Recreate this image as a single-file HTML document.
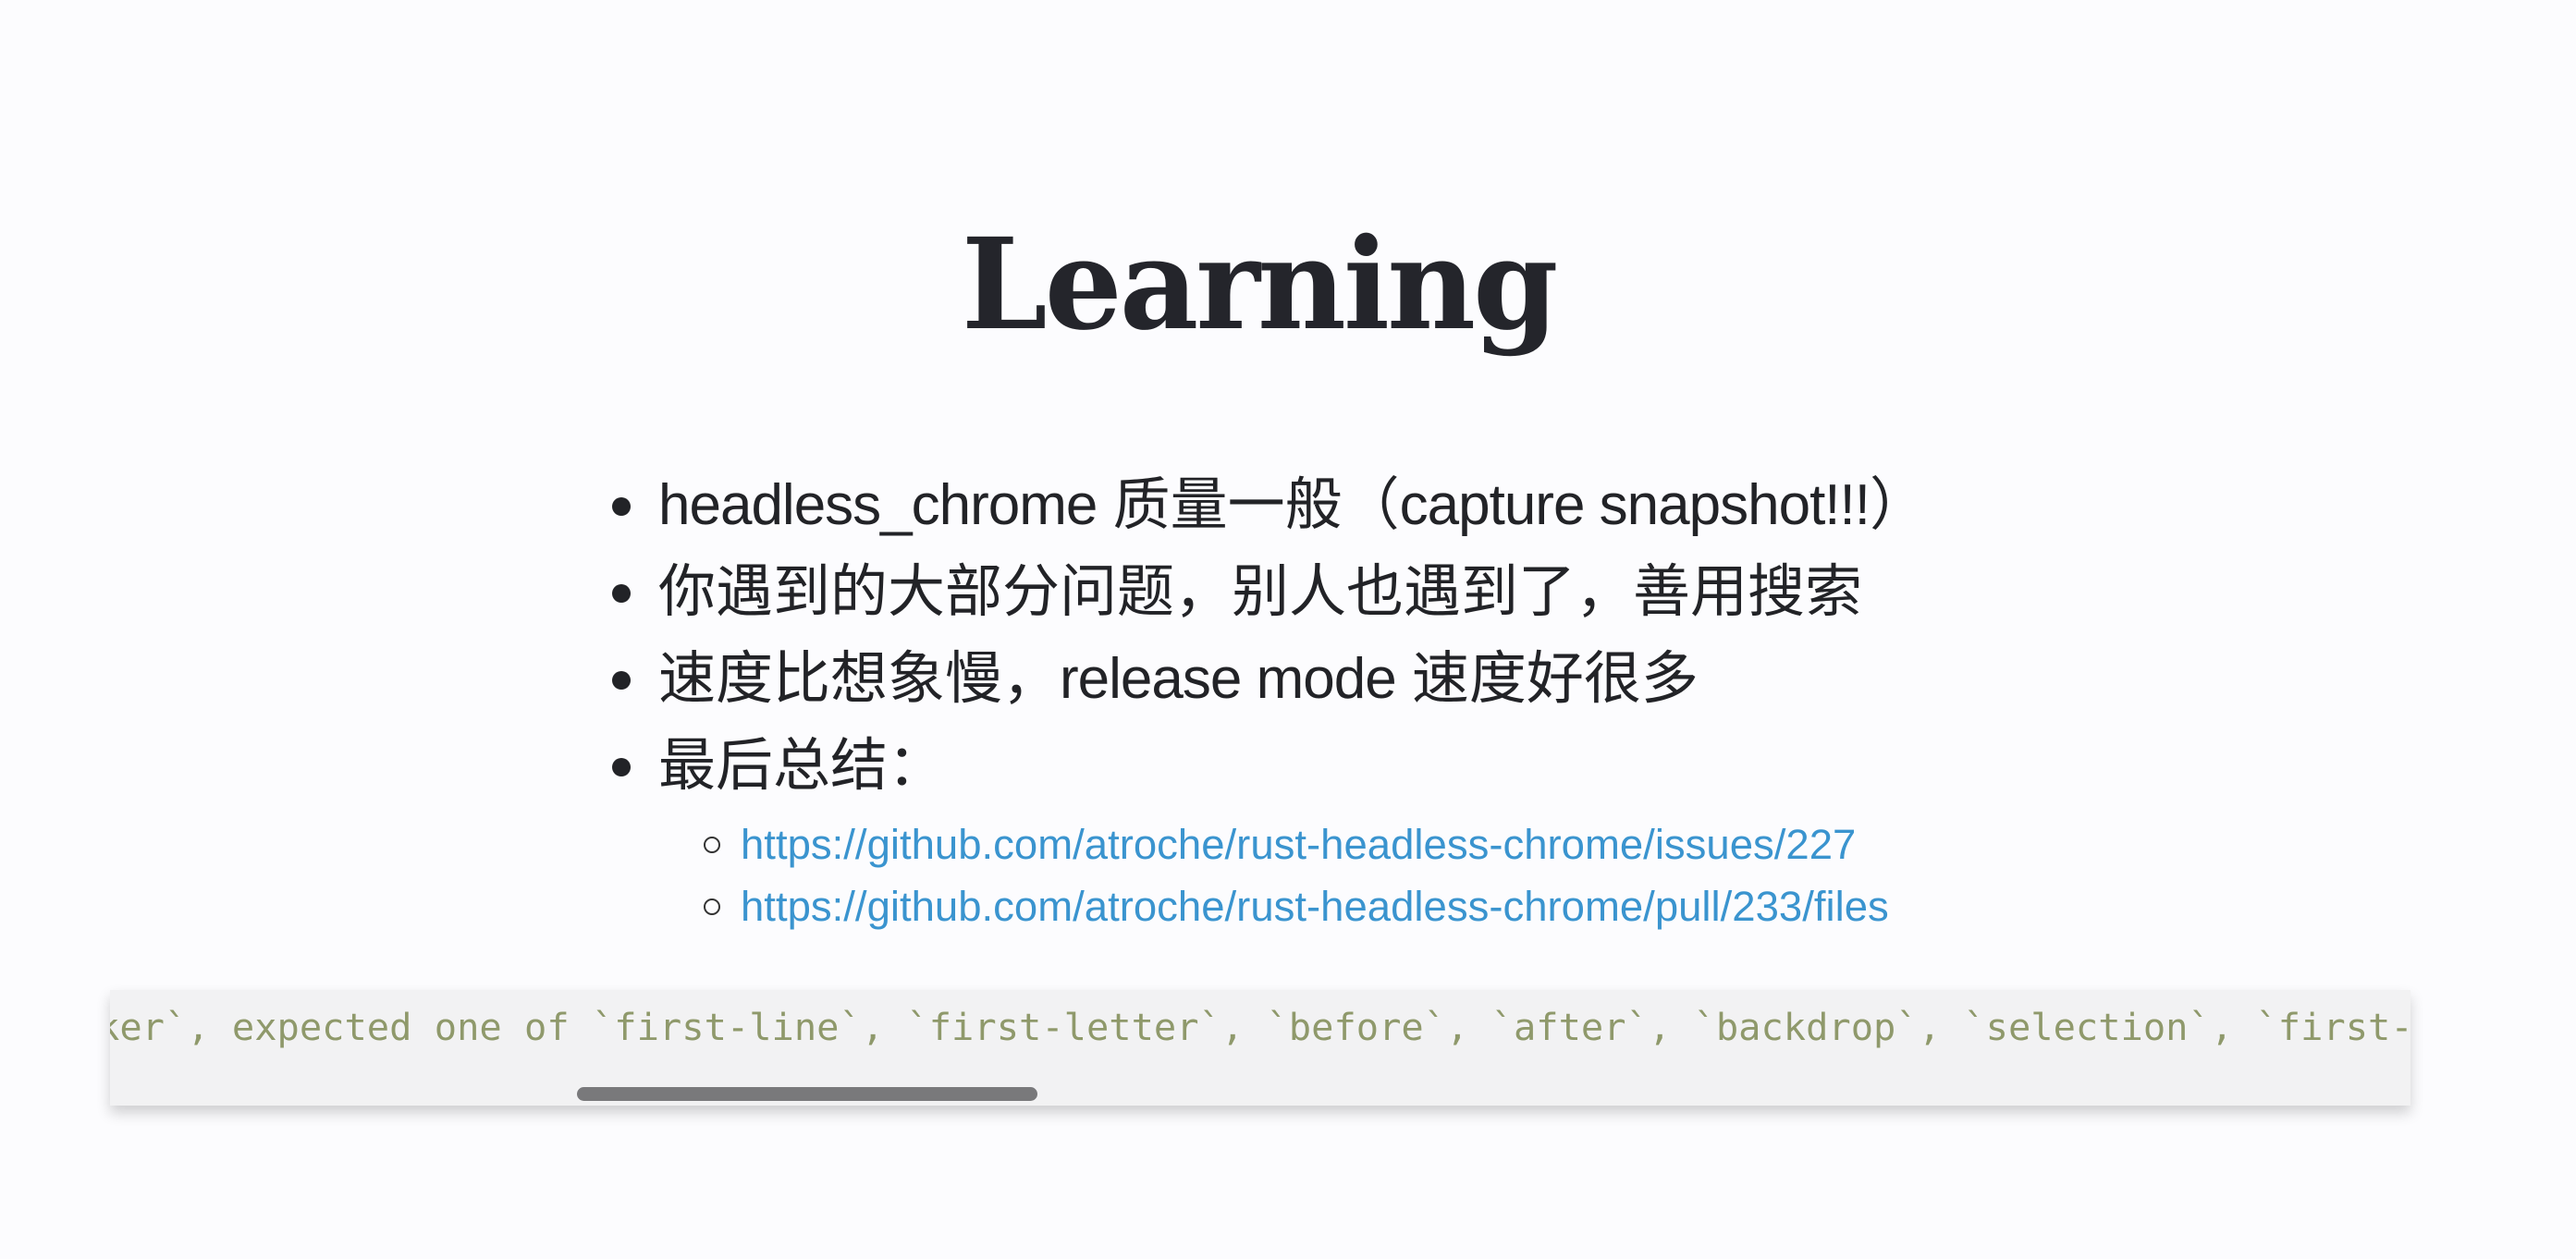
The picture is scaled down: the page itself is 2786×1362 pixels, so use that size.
<!DOCTYPE html>
<html><head><meta charset="utf-8"><style>
html,body{margin:0;padding:0;width:2786px;height:1362px;background:#fcfcfe;overflow:hidden;position:relative;}
.t{position:absolute;left:-32px;width:2786px;top:240px;text-align:center;font-family:"DejaVu Serif",serif;font-weight:bold;font-size:136px;color:#24252b;letter-spacing:-3px;line-height:1;}
.t span{display:inline-block;transform:scaleX(0.97);}
.li{position:absolute;left:712px;font-family:"Liberation Sans","Noto Sans CJK SC",sans-serif;font-size:62px;color:#222327;white-space:nowrap;line-height:1;}
.li i{font-style:normal;letter-spacing:-1px;}
.d{position:absolute;left:662px;width:20px;height:20px;border-radius:50%;background:#222327;}
.s{position:absolute;left:801px;font-family:"Liberation Sans",sans-serif;font-size:45.5px;color:#3a94cf;white-space:nowrap;line-height:1;}
.c{position:absolute;left:761px;width:14px;height:14px;border:2px solid #333;border-radius:50%;}
.code{position:absolute;left:119px;top:1071px;width:2488px;height:125px;background:#f2f2f3;box-shadow:0 8px 14px rgba(0,0,0,0.18);overflow:hidden;}
.code span{position:absolute;left:-14px;top:16px;font-family:"DejaVu Sans Mono",monospace;font-size:40.4px;color:#8f996b;white-space:pre;}
.bar{position:absolute;left:505px;top:105px;width:498px;height:15px;border-radius:8px;background:#79797b;}
</style></head><body>
<div class="t"><span>Learning</span></div>
<div class="d" style="top:538px"></div><div class="li" style="top:516px"><i>headless_chrome</i> 质量一般（<i>capture snapshot!!!</i>）</div>
<div class="d" style="top:632px"></div><div class="li" style="top:610px">你遇到的大部分问题，别人也遇到了，善用搜索</div>
<div class="d" style="top:726px"></div><div class="li" style="top:704px">速度比想象慢，<i>release mode</i> 速度好很多</div>
<div class="d" style="top:820px"></div><div class="li" style="top:798px">最后总结：</div>
<div class="c" style="top:905px"></div><div class="s" style="top:891px">https://github.com/atroche/rust-headless-chrome/issues/227</div>
<div class="c" style="top:972px"></div><div class="s" style="top:958px">https://github.com/atroche/rust-headless-chrome/pull/233/files</div>
<div class="code"><span>ker`, expected one of `first-line`, `first-letter`, `before`, `after`, `backdrop`, `selection`, `first-letter`</span><div class="bar"></div></div>
</body></html>
